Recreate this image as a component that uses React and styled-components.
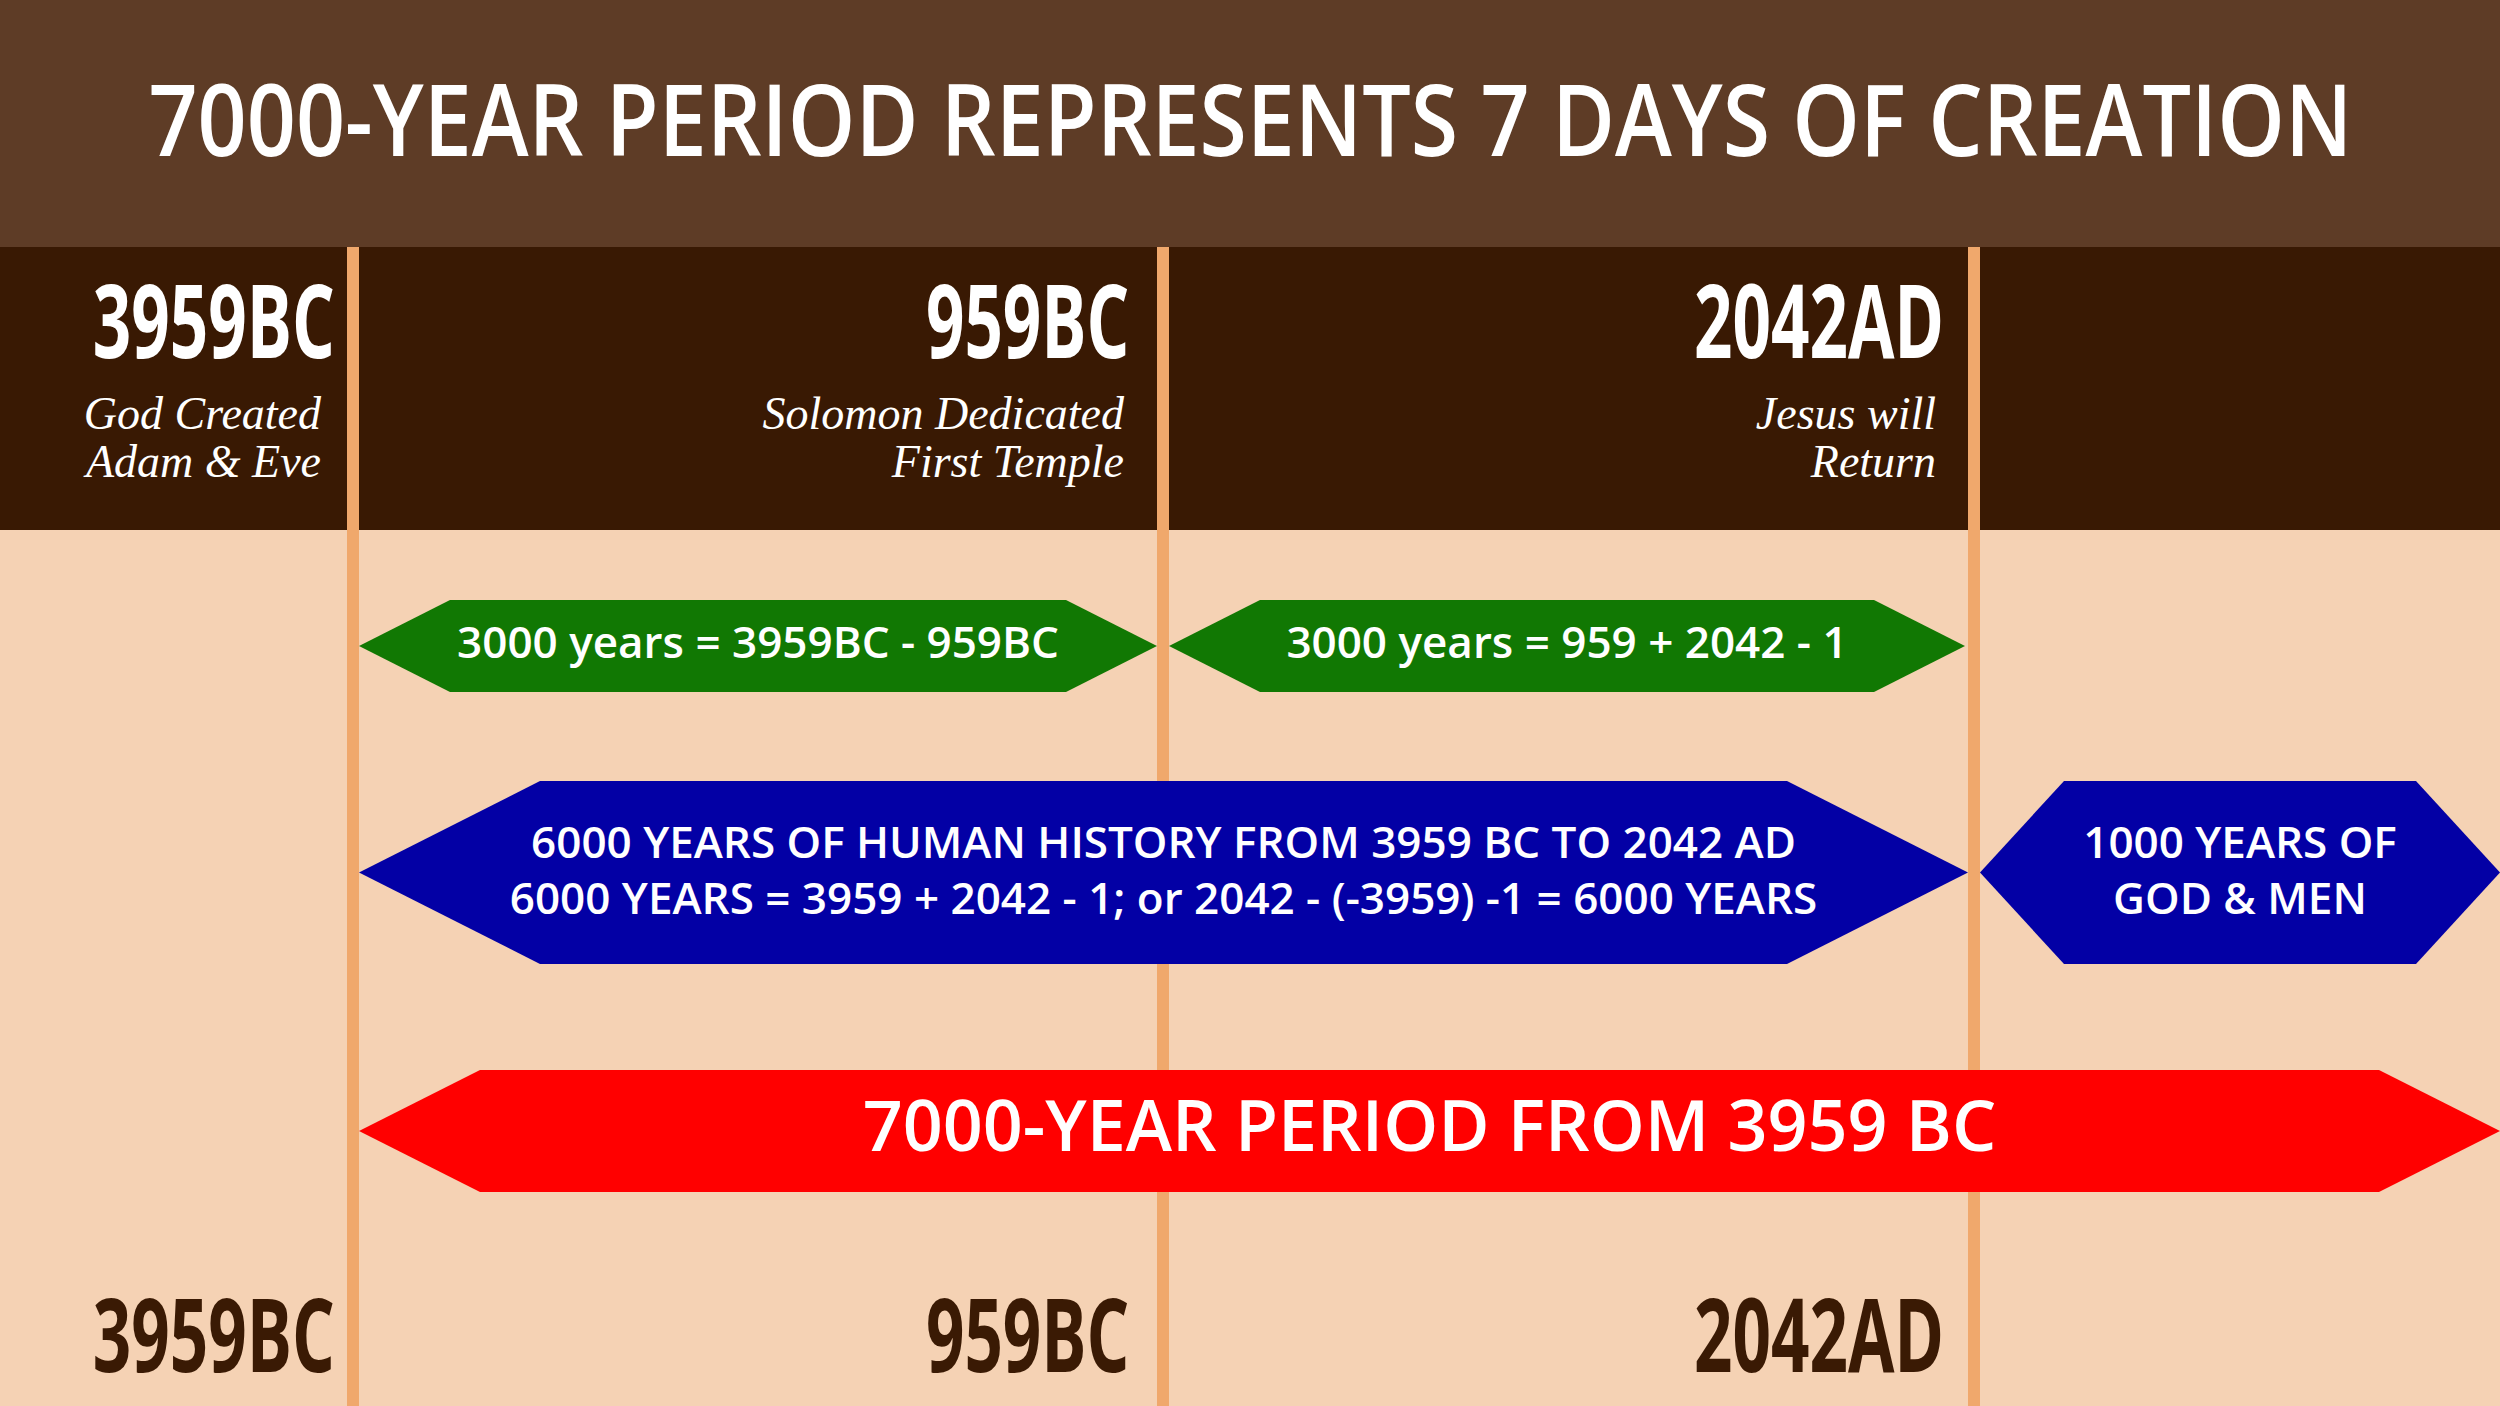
import styled, { createGlobalStyle } from 'styled-components';

const GlobalStyle = createGlobalStyle`
  html, body {
    margin: 0;
    padding: 0;
  }

  body {
    background: #f5d2b4;
    font-family: 'Open Sans', 'Liberation Sans', sans-serif;
  }
`;

// pad: gap between the year and the divider, noteGap: gap between the caption and the divider
const markers = [
    { year: '3959BC', note: ['God Created', 'Adam & Eve'], col: 1, pad: 12, noteGap: 26 },
    { year: '959BC', note: ['Solomon Dedicated', 'First Temple'], col: 3, pad: 28, noteGap: 33 },
    { year: '2042AD', note: ['Jesus will', 'Return'], col: 5, pad: 24, noteGap: 32 },
];

const dividers = [2, 4, 6];

const App = () => {
    return (
        <Page>
            <GlobalStyle />
            <Header>
                <Title>7000-YEAR PERIOD REPRESENTS 7 DAYS OF CREATION</Title>
            </Header>
            <Timeline>
                <Band />
                {dividers.map((col) => (
                    <Divider key={col} $col={col} />
                ))}
                {markers.map((m) => (
                    <Marker key={m.year} $col={m.col} $row={1} $pad={m.pad}>
                        <Year>{m.year}</Year>
                        <Note $pad={m.noteGap - m.pad}>
                            {m.note[0]}
                            <br />
                            {m.note[1]}
                        </Note>
                    </Marker>
                ))}

                <Arrow $cols="3" $row={3} $tip={91} $color="#117803" $lift={10}>
                    3000 years = 3959BC - 959BC
                </Arrow>
                <Arrow $cols="5" $row={3} $tip={91} $color="#117803" $lift={10} $trim={3}>
                    3000 years = 959 + 2042 - 1
                </Arrow>

                <Arrow $cols="3 / 6" $row={5} $tip={181} $color="#0300a5" $lift={8}>
                    6000 YEARS OF HUMAN HISTORY FROM 3959 BC TO 2042 AD
                    <br />
                    6000 YEARS = 3959 + 2042 - 1; or 2042 - (-3959) -1 = 6000 YEARS
                </Arrow>
                <Arrow $cols="7" $row={5} $tip={84} $color="#0300a5" $lift={8}>
                    1000 YEARS OF
                    <br />
                    GOD &amp; MEN
                </Arrow>

                <Arrow $cols="3 / 8" $row={7} $tip={121} $color="#ff0000" $lift={14} $size={70}>
                    7000-YEAR PERIOD FROM 3959 BC
                </Arrow>

                {markers.map((m) => (
                    <Marker key={`bottom-${m.year}`} $col={m.col} $row={8} $pad={m.pad} $top={90}>
                        <Year $dark>{m.year}</Year>
                    </Marker>
                ))}
            </Timeline>
        </Page>
    );
};

export default App;

const Page = styled.div`
    display: flex;
    flex-direction: column;
    height: 100vh;
    overflow: hidden;
`;

const Header = styled.header`
    height: 247px;
    box-sizing: border-box;
    padding-top: 67px;
    display: flex;
    justify-content: center;
    align-items: flex-start;
    background-color: #5e3c26;
`;

const Title = styled.h1`
    margin: 0;
    white-space: nowrap;
    color: #ffffff;
    font-family: 'Open Sans', 'Liberation Sans', sans-serif;
    font-weight: 600;
    font-size: 100px;
    line-height: 1;
    transform: scaleX(0.86);
    transform-origin: center;
`;

const Timeline = styled.main`
    flex: 1;
    display: grid;
    grid-template-columns: 347px 12px 798px 12px 799px 12px 1fr;
    grid-template-rows: 283px 70px 92px 89px 183px 106px 122px 1fr;
    background-color: #f5d2b4;
`;

const Band = styled.div`
    grid-column: 1 / -1;
    grid-row: 1;
    background-color: #391903;
`;

const Divider = styled.div`
    grid-column: ${(p) => p.$col};
    grid-row: 1 / -1;
    background-color: #f0a86c;
`;

const Marker = styled.div`
    grid-column: ${(p) => p.$col};
    grid-row: ${(p) => p.$row};
    min-width: 0;
    display: flex;
    flex-direction: column;
    align-items: flex-end;
    padding: ${(p) => p.$top || 21}px ${(p) => p.$pad}px 0 0;
    text-align: right;
`;

const Year = styled.div`
    white-space: nowrap;
    font-family: 'Open Sans', 'Liberation Sans', sans-serif;
    font-weight: 700;
    font-size: 102px;
    line-height: 1;
    color: ${(p) => (p.$dark ? '#3a1a04' : '#ffffff')};
    transform: scaleX(0.66);
    transform-origin: right center;
`;

const Note = styled.div`
    margin-top: 20px;
    margin-right: ${(p) => p.$pad}px;
    white-space: nowrap;
    font-family: 'Liberation Serif', 'Times New Roman', serif;
    font-style: italic;
    font-size: 46px;
    line-height: 48px;
    color: #ffffff;
`;

const Arrow = styled.div`
    grid-column: ${(p) => p.$cols};
    grid-row: ${(p) => p.$row};
    margin-right: ${(p) => p.$trim || 0}px;
    box-sizing: border-box;
    display: flex;
    align-items: center;
    justify-content: center;
    padding-bottom: ${(p) => p.$lift}px;
    background-color: ${(p) => p.$color};
    clip-path: polygon(
        0 50%,
        ${(p) => p.$tip}px 0,
        calc(100% - ${(p) => p.$tip}px) 0,
        100% 50%,
        calc(100% - ${(p) => p.$tip}px) 100%,
        ${(p) => p.$tip}px 100%
    );
    color: #ffffff;
    font-family: 'Open Sans', 'Liberation Sans', sans-serif;
    font-weight: 600;
    font-size: ${(p) => p.$size || 44}px;
    line-height: ${(p) => (p.$size ? 1 : '56px')};
    text-align: center;
    white-space: nowrap;
`;
